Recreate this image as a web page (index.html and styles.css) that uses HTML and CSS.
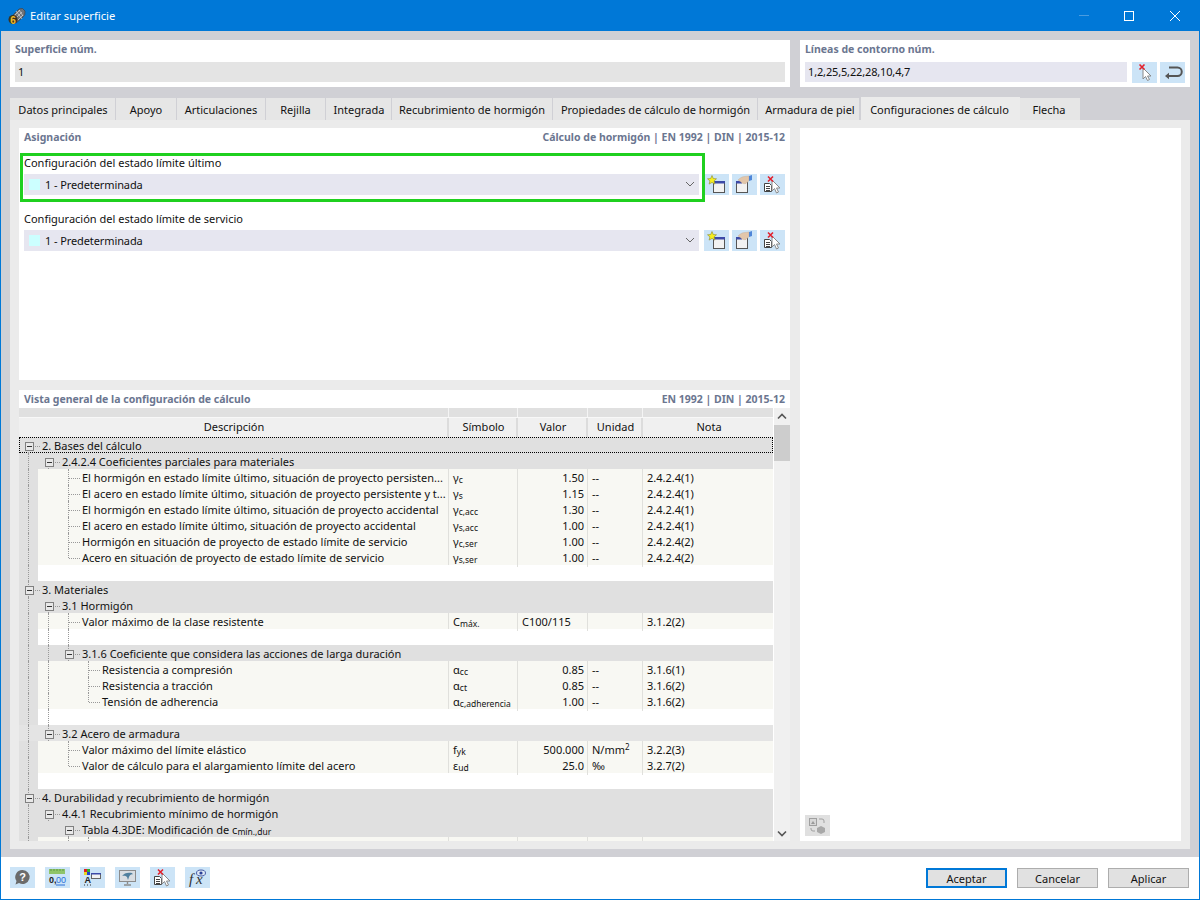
FILE: index.html
```html
<!DOCTYPE html>
<html lang="es">
<head>
  <meta charset="UTF-8">
  <title>Editar superficie</title>
  <link rel="stylesheet" href="styles.css">
</head>
<body>
  <svg class="defs" width="0" height="0">
    <symbol id="i-new" viewBox="0 0 25 21">
      <rect x="9.500" y="7.500" width="11" height="11" fill="#f2f2f2" stroke="#555"/>
      <rect x="9" y="7" width="12" height="2.500" fill="#3c4aa8"/>
      <path d="M8 1.500l1.300 3 3.200.3-2.400 2.100.8 3.200L8 8.400l-2.900 1.700.8-3.200-2.400-2.100 3.200-.3z" fill="#f5ee1e" stroke="#8a8a30" stroke-width=".6"/>
    </symbol>
    <symbol id="i-edit" viewBox="0 0 25 21">
      <rect x="4.500" y="7.500" width="11" height="11" fill="#f2f2f2" stroke="#555"/>
      <rect x="4" y="7" width="6" height="2.500" fill="#3c4aa8"/>
      <path d="M6 6c2-2 4-3.500 7-3.500l4-.5v4.500l-3 3c-2 .5-4 0-5-1.500z" fill="#e2c6aa" stroke="#c0a894" stroke-width=".4"/>
      <path d="M17 2l3-1v5l-3 1z" fill="#4f86d8"/>
    </symbol>
    <symbol id="i-del" viewBox="0 0 25 21">
      <path d="M4.500 9.500h5l2 2v6h-7z" fill="#fff" stroke="#444"/>
      <path d="M6 12.500h4M6 14.500h4M6 16.500h4" stroke="#444"/>
      <path d="M12 6v11l2.500-2.500 2 4.500 2-1-2-4h3.500z" fill="#fff" stroke="#8a8a8a"/>
      <path d="M8 2.500l5 5M13 2.500l-5 5" stroke="#e3202c" stroke-width="1.600"/>
    </symbol>
    <symbol id="i-pick" viewBox="0 0 25 21">
      <path d="M11 6v11l2.500-2.500 2 4 2-1-2-3.500H19z" fill="#fff" stroke="#8a8a8a"/>
      <path d="M7.500 2.500l5 5M12.500 2.500l-5 5" stroke="#e3202c" stroke-width="1.600"/>
    </symbol>
    <symbol id="i-back" viewBox="0 0 25 21">
      <path d="M9 5.500h8.500a4 4 0 0 1 0 8.500H7" fill="none" stroke="#555" stroke-width="2"/>
      <path d="M5 14l4-3.200v6.400z" fill="#555"/>
    </symbol>
    <symbol id="i-view" viewBox="0 0 25 21">
      <rect x="4.500" y="3.500" width="16" height="11" fill="#d8dde2" stroke="#8c8c8c"/>
      <path d="M7 9c2-3 6-4 10-3l1 1.500c-2-.5-3 .5-4 2.500l-1 3-1-3c-1-1-3-1.500-5-1z" fill="#4f7f9e"/>
      <path d="M12.500 15v2M9 18h7" stroke="#8c8c8c" stroke-width="1.400"/>
    </symbol>
    <symbol id="i-swap" viewBox="0 0 25 21">
      <rect x="4.500" y="3.500" width="7" height="7" fill="#d8d8d8" stroke="#a0a0a0"/>
      <path d="M6 9l2-3 2 3z" fill="#9a9a9a"/>
      <path d="M14 4h3a2 2 0 0 1 2 2v2M6 13v1a2 2 0 0 0 2 2h2" fill="none" stroke="#a0a0a0"/>
      <path d="M12 13l4-2 4 2v4l-4 2-4-2z" fill="#a8a8a8"/>
    </symbol>
  </svg>

  <div class="window">
    <header class="titlebar">
      <svg class="app-icon" width="18" height="18" viewBox="0 0 18 18">
        <path d="M4 9l7-7q4-2 6 2 1 4-3 7l-6 5q-5-2-4-7z" fill="#6e7278" stroke="#34373b" stroke-width=".6"/>
        <path d="M6 9l6-6M8 11l6-6M10 13l5-5M8 4l6 8M11 3l4 6" stroke="#d6d9dd" stroke-width=".7"/>
        <circle cx="5" cy="12.500" r="4.500" fill="#3a3320"/>
        <text x="2.300" y="16.500" class="app-six">6</text>
      </svg>
      <span class="title">Editar superficie</span>
      <div class="win-buttons">
        <span class="win-min"></span>
        <span class="win-max"></span>
        <svg width="12" height="12" viewBox="0 0 12 12"><path d="M1 1l10 10M11 1L1 11" stroke="#fff"/></svg>
      </div>
    </header>

    <main class="main">
      <div class="top-row">
        <section class="top-panel">
          <div class="heading">Superficie núm.</div>
          <div class="field field-grey">1</div>
        </section>
        <section class="top-panel">
          <div class="heading">Líneas de contorno núm.</div>
          <div class="field-row">
            <div class="field field-blue">1,2,25,5,22,28,10,4,7</div>
            <span class="btn btn-first"><svg><use href="#i-pick"/></svg></span>
            <span class="btn"><svg><use href="#i-back"/></svg></span>
          </div>
        </section>
      </div>

      <nav class="tabs">
        <span class="tab tab-1">Datos principales</span>
        <span class="tab tab-2">Apoyo</span>
        <span class="tab tab-3">Articulaciones</span>
        <span class="tab tab-4">Rejilla</span>
        <span class="tab tab-5">Integrada</span>
        <span class="tab tab-6">Recubrimiento de hormigón</span>
        <span class="tab tab-7">Propiedades de cálculo de hormigón</span>
        <span class="tab tab-8">Armadura de piel</span>
        <span class="tab tab-9 active">Configuraciones de cálculo</span>
        <span class="tab tab-10">Flecha</span>
      </nav>

      <div class="pane">
        <div class="left-col">
          <section class="assign">
            <div class="head-row">
              <span class="heading">Asignación</span>
              <span class="heading">Cálculo de hormigón | EN 1992 | DIN | 2015-12</span>
            </div>
            <div class="config config-uls">
              <div class="config-label">Configuración del estado límite último</div>
              <div class="config-row">
                <div class="combo"><span class="swatch"></span>1 - Predeterminada
                  <svg class="chevron" width="10" height="6" viewBox="0 0 10 6"><path d="M1 1l4 4 4-4" fill="none" stroke="#666" stroke-width="1"/></svg>
                </div>
                <span class="btn"><svg><use href="#i-new"/></svg></span>
                <span class="btn"><svg><use href="#i-edit"/></svg></span>
                <span class="btn"><svg><use href="#i-del"/></svg></span>
              </div>
            </div>
            <div class="config">
              <div class="config-label">Configuración del estado límite de servicio</div>
              <div class="config-row">
                <div class="combo"><span class="swatch"></span>1 - Predeterminada
                  <svg class="chevron" width="10" height="6" viewBox="0 0 10 6"><path d="M1 1l4 4 4-4" fill="none" stroke="#666" stroke-width="1"/></svg>
                </div>
                <span class="btn"><svg><use href="#i-new"/></svg></span>
                <span class="btn"><svg><use href="#i-edit"/></svg></span>
                <span class="btn"><svg><use href="#i-del"/></svg></span>
              </div>
            </div>
          </section>

          <section class="overview">
            <div class="head-row head-overview">
              <span class="heading">Vista general de la configuración de cálculo</span>
              <span class="heading">EN 1992 | DIN | 2015-12</span>
            </div>
            <div class="table-wrap">
              <div class="table">
                <div class="row row-band"><span></span><span></span><span></span><span></span><span></span></div>
                <div class="row row-head"><span>Descripción</span><span>Símbolo</span><span>Valor</span><span>Unidad</span><span>Nota</span></div>
                <div class="tbody">
                  <div class="row group focus"><div class="desc"><i class="g b top"><u></u></i><em>2. Bases del cálculo</em></div></div>
                  <div class="row group"><div class="desc"><i class="g v"></i><i class="g b top"><u></u></i><em>2.4.2.4 Coeficientes parciales para materiales</em></div></div>
                  <div class="row data"><div class="desc"><i class="g v"></i><i class="g"></i><i class="g t"></i><em>El hormigón en estado límite último, situación de proyecto persisten...</em></div><div class="sym">γ<sub>c</sub></div><div class="val">1.50</div><div class="unit">--</div><div class="note">2.4.2.4(1)</div></div>
                  <div class="row data"><div class="desc"><i class="g v"></i><i class="g"></i><i class="g t"></i><em>El acero en estado límite último, situación de proyecto persistente y t...</em></div><div class="sym">γ<sub>s</sub></div><div class="val">1.15</div><div class="unit">--</div><div class="note">2.4.2.4(1)</div></div>
                  <div class="row data"><div class="desc"><i class="g v"></i><i class="g"></i><i class="g t"></i><em>El hormigón en estado límite último, situación de proyecto accidental</em></div><div class="sym">γ<sub>c,acc</sub></div><div class="val">1.30</div><div class="unit">--</div><div class="note">2.4.2.4(1)</div></div>
                  <div class="row data"><div class="desc"><i class="g v"></i><i class="g"></i><i class="g t"></i><em>El acero en estado límite último, situación de proyecto accidental</em></div><div class="sym">γ<sub>s,acc</sub></div><div class="val">1.00</div><div class="unit">--</div><div class="note">2.4.2.4(1)</div></div>
                  <div class="row data"><div class="desc"><i class="g v"></i><i class="g"></i><i class="g t"></i><em>Hormigón en situación de proyecto de estado límite de servicio</em></div><div class="sym">γ<sub>c,ser</sub></div><div class="val">1.00</div><div class="unit">--</div><div class="note">2.4.2.4(2)</div></div>
                  <div class="row data"><div class="desc"><i class="g v"></i><i class="g"></i><i class="g e"></i><em>Acero en situación de proyecto de estado límite de servicio</em></div><div class="sym">γ<sub>s,ser</sub></div><div class="val">1.00</div><div class="unit">--</div><div class="note">2.4.2.4(2)</div></div>
                  <div class="row blank"><div class="desc"><i class="g v"></i></div></div>

                  <div class="row group"><div class="desc"><i class="g b"><u></u></i><em>3. Materiales</em></div></div>
                  <div class="row group"><div class="desc"><i class="g v"></i><i class="g b top"><u></u></i><em>3.1 Hormigón</em></div></div>
                  <div class="row data"><div class="desc"><i class="g v"></i><i class="g v"></i><i class="g t"></i><em>Valor máximo de la clase resistente</em></div><div class="sym">C<sub>máx.</sub></div><div class="val val-left">C100/115</div><div class="unit"></div><div class="note">3.1.2(2)</div></div>
                  <div class="row blank"><div class="desc"><i class="g v"></i><i class="g v"></i><i class="g v"></i></div></div>
                  <div class="row group"><div class="desc"><i class="g v"></i><i class="g v"></i><i class="g b"><u></u></i><em>3.1.6 Coeficiente que considera las acciones de larga duración</em></div></div>
                  <div class="row data"><div class="desc"><i class="g v"></i><i class="g v"></i><i class="g"></i><i class="g t"></i><em>Resistencia a compresión</em></div><div class="sym">α<sub>cc</sub></div><div class="val">0.85</div><div class="unit">--</div><div class="note">3.1.6(1)</div></div>
                  <div class="row data"><div class="desc"><i class="g v"></i><i class="g v"></i><i class="g"></i><i class="g t"></i><em>Resistencia a tracción</em></div><div class="sym">α<sub>ct</sub></div><div class="val">0.85</div><div class="unit">--</div><div class="note">3.1.6(2)</div></div>
                  <div class="row data"><div class="desc"><i class="g v"></i><i class="g v"></i><i class="g"></i><i class="g e"></i><em>Tensión de adherencia</em></div><div class="sym">α<sub>c,adherencia</sub></div><div class="val">1.00</div><div class="unit">--</div><div class="note">3.1.6(2)</div></div>
                  <div class="row blank"><div class="desc"><i class="g v"></i><i class="g v"></i></div></div>
                  <div class="row group light"><div class="desc"><i class="g v"></i><i class="g b"><u></u></i><em>3.2 Acero de armadura</em></div></div>
                  <div class="row data"><div class="desc"><i class="g v"></i><i class="g"></i><i class="g t"></i><em>Valor máximo del límite elástico</em></div><div class="sym">f<sub>yk</sub></div><div class="val">500.000</div><div class="unit">N/mm<sup>2</sup></div><div class="note">3.2.2(3)</div></div>
                  <div class="row data"><div class="desc"><i class="g v"></i><i class="g"></i><i class="g e"></i><em>Valor de cálculo para el alargamiento límite del acero</em></div><div class="sym">ε<sub>ud</sub></div><div class="val">25.0</div><div class="unit">‰</div><div class="note">3.2.7(2)</div></div>
                  <div class="row blank"><div class="desc"><i class="g v"></i></div></div>

                  <div class="row group"><div class="desc"><i class="g b"><u></u></i><em>4. Durabilidad y recubrimiento de hormigón</em></div></div>
                  <div class="row group"><div class="desc"><i class="g v"></i><i class="g b top"><u></u></i><em>4.4.1 Recubrimiento mínimo de hormigón</em></div></div>
                  <div class="row group"><div class="desc"><i class="g v"></i><i class="g"></i><i class="g b top"><u></u></i><em>Tabla 4.3DE: Modificación de c<sub>mín.,dur</sub></em></div></div>
                  <div class="row data"><div class="desc"><i class="g v"></i><i class="g"></i><i class="g v"></i><i class="g v"></i></div><div class="sym"></div><div class="val"></div><div class="unit"></div><div class="note"></div></div>
                </div>
              </div>
              <div class="scrollbar">
                <span class="scroll-btn"><svg width="10" height="7" viewBox="0 0 10 7"><path d="M1 5.500l4-4 4 4" fill="none" stroke="#555" stroke-width="1.600"/></svg></span>
                <span class="thumb"></span>
                <span class="scroll-btn scroll-down"><svg width="10" height="7" viewBox="0 0 10 7"><path d="M1 1.500l4 4 4-4" fill="none" stroke="#555" stroke-width="1.600"/></svg></span>
              </div>
            </div>
          </section>
        </div>

        <aside class="preview">
          <span class="btn btn-off"><svg><use href="#i-swap"/></svg></span>
        </aside>
      </div>
    </main>

    <footer class="footer">
      <div class="tools">
        <span class="btn">
          <svg viewBox="0 0 25 21">
            <path d="M12.500 3a7 7 0 1 1-3.500 13l-3.500 1.500 1-3.500a7 7 0 0 1 6-11z" fill="#6b6b6b"/>
            <text x="12.500" y="14" text-anchor="middle" class="svg-q">?</text>
          </svg>
        </span>
        <span class="btn">
          <svg viewBox="0 0 25 21">
            <rect x="4" y="2" width="16" height="5" fill="#8fc46a"/>
            <path d="M6 2v2M9 2v2M12 2v2M15 2v2M18 2v2" stroke="#5f9a45"/>
            <text x="4" y="16" class="svg-num">0,<tspan x="11" class="svg-blue">00</tspan></text>
            <path d="M11 18h9" stroke="#2a6fd8"/>
          </svg>
        </span>
        <span class="btn">
          <svg viewBox="0 0 25 21">
            <rect x="4" y="2" width="3" height="3" fill="#e02020"/>
            <rect x="7" y="2" width="3" height="3" fill="#30b030"/>
            <rect x="4" y="5" width="3" height="3" fill="#e8d820"/>
            <rect x="7" y="5" width="3" height="3" fill="#2040d0"/>
            <text x="4.500" y="16" class="svg-num">A</text>
            <path d="M4 18h1M7 18h1M10 18h1" stroke="#333"/>
            <rect x="11.500" y="6.500" width="9" height="5" fill="#f2f2f2" stroke="#666"/>
            <rect x="11" y="6" width="10" height="1.500" fill="#3c4aa8"/>
          </svg>
        </span>
        <span class="btn"><svg><use href="#i-view"/></svg></span>
        <span class="btn"><svg><use href="#i-del"/></svg></span>
        <span class="btn">
          <svg viewBox="0 0 25 21">
            <text x="4" y="17" class="svg-fx">f<tspan x="11">x</tspan></text>
            <ellipse cx="16" cy="6" rx="4.500" ry="3" fill="#dce6f5" stroke="#4a5fa8"/>
            <circle cx="16" cy="6" r="1.600" fill="#2a3f98"/>
          </svg>
        </span>
      </div>
      <div class="actions">
        <button class="action primary">Aceptar</button>
        <button class="action">Cancelar</button>
        <button class="action">Aplicar</button>
      </div>
    </footer>
  </div>
</body>
</html>
```

FILE: styles.css
```css
*,
*::before,
*::after {
  box-sizing: border-box;
}
body {
  margin: 0;
  font-family: "Noto Sans", sans-serif;
  font-size: 11px;
  color: #111;
}
.defs {
  position: absolute;
}
.window {
  width: 1200px;
  height: 900px;
  display: flex;
  flex-direction: column;
  border: 1px solid #0078d7;
  border-top: 0;
  background: #d0d0d5;
}

/* Barra de titulo */
.titlebar {
  height: 31px;
  flex: none;
  margin: 0 -1px;
  padding-left: 8px;
  display: flex;
  align-items: center;
  background: #0078d7;
  color: #fff;
}
.app-icon {
  margin-right: 4px;
}
.app-six {
  font: bold 10px "Liberation Sans", sans-serif;
  fill: #f0bc28;
}
.title {
  font-size: 11.200px;
}
.win-buttons {
  margin-left: auto;
  display: flex;
  align-items: center;
  padding-right: 19px;
}
.win-min {
  width: 10px;
  height: 1px;
  background: #4a9ce0;
  margin-right: 35px;
}
.win-max {
  width: 10px;
  height: 10px;
  border: 1px solid #fff;
  margin-right: 35px;
}

.main {
  flex: 1;
  padding: 9px 9px 8px;
  display: flex;
  flex-direction: column;
  min-height: 0;
}
.top-row {
  display: flex;
  gap: 10px;
}
.top-panel {
  height: 47px;
  background: #fff;
  padding: 1px 5px 0;
}
.top-panel:first-child {
  width: 780px;
}
.top-panel:last-child {
  width: 390px;
}
.heading {
  font-weight: 700;
  font-size: 10.500px;
  color: #6b7690;
  line-height: 16px;
}
.top-panel .heading {
  height: 21px;
}
.field {
  height: 20px;
  line-height: 20px;
  padding-left: 3px;
}
.field-grey {
  background: #e4e4e4;
}
.field-blue {
  background: #e6e6f0;
  width: 322px;
  letter-spacing: -.15px;
}
.field-row {
  display: flex;
}
.btn {
  width: 25px;
  height: 21px;
  flex: none;
  background: #cce4f7;
  display: block;
}
.btn svg {
  width: 25px;
  height: 21px;
  display: block;
}
.btn-first {
  margin: 0 3px 0 5px;
}
.svg-q {
  font: bold 11px "Liberation Sans", sans-serif;
  fill: #fff;
}
.svg-num {
  font: bold 9px "Liberation Sans", sans-serif;
  fill: #222;
}
.svg-blue {
  fill: #2a6fd8;
  font-weight: 400;
}
.svg-fx {
  font: italic 15px "Liberation Serif", serif;
  fill: #333;
}

/* Pestanas */
.tabs {
  margin-top: 10px;
  height: 23px;
  display: flex;
  align-items: flex-end;
  gap: 1px;
}
.tab {
  height: 22px;
  line-height: 24px;
  background: #e6e6e6;
  text-align: center;
  white-space: nowrap;
}
.tab.active {
  height: 23px;
  line-height: 26px;
  background: #ebebeb;
}
.tab-1 { width: 105px; padding-left: 1px; }
.tab-2 { width: 60px; }
.tab-3 { width: 88px; }
.tab-4 { width: 59px; }
.tab-5 { width: 65px; padding-left: 1px; }
.tab-6 { width: 160px; }
.tab-7 { width: 204px; padding-left: 1px; }
.tab-8 { width: 101px; padding-left: 3px; }
.tab-9 { width: 159px; margin-left: 1px; padding-right: 2px; }
.tab-10 { width: 60px; margin-left: -1px; padding-right: 2px; }

.pane {
  flex: 1;
  min-height: 0;
  background: #ebebeb;
  padding: 8px 9px;
  display: flex;
  gap: 10px;
}
.left-col {
  width: 771px;
  display: flex;
  flex-direction: column;
  gap: 10px;
}
.preview {
  width: 381px;
  background: #fff;
  display: flex;
  align-items: flex-end;
  padding: 0 0 5px 5px;
}
.btn-off {
  background: #e0e0e0;
}

/* Asignacion */
.assign {
  height: 252px;
  background: #fff;
  padding: 1px 5px;
}
.head-row {
  display: flex;
  justify-content: space-between;
  height: 16px;
}
.config {
  position: relative;
  height: 56px;
}
.config-uls {
  margin-top: 8px;
}
.config-uls::after {
  content: "";
  position: absolute;
  left: -4px;
  top: 0;
  width: 685px;
  height: 49px;
  border: 3px solid #1fd01f;
}
.config-label {
  height: 21px;
  line-height: 19px;
}
.config-row {
  display: flex;
}
.config-row .btn {
  margin-left: 3px;
}
.config-row .combo + .btn {
  margin-left: 5px;
}
.combo {
  width: 675px;
  height: 21px;
  background: #e6e6f0;
  display: flex;
  align-items: center;
  padding-left: 5px;
  position: relative;
  letter-spacing: -.1px;
}
.swatch {
  width: 11px;
  height: 11px;
  background: #ccffff;
  margin-right: 5px;
}
.chevron {
  position: absolute;
  right: 4px;
  top: 7px;
}

/* Tabla de resumen */
.overview {
  flex: 1;
  min-height: 0;
  background: #fff;
  display: flex;
  flex-direction: column;
}
.head-overview {
  height: 18px;
  padding: 1px 5px 0;
}
.table-wrap {
  flex: 1;
  min-height: 0;
  display: flex;
  gap: 1px;
}
.table {
  width: 754px;
  display: flex;
  flex-direction: column;
}
.tbody {
  flex: 1;
  min-height: 0;
  overflow: hidden;
}
.row {
  display: grid;
  grid-template-columns: 430px 69px 70px 55px 130px;
  height: 16px;
  line-height: 18px;
}
.row-band {
  height: 9px;
  background: #e0e0e0;
}
.row-band span {
  border-right: 1px solid #f4f4f4;
}
.row-band span:last-child,
.row-head span:last-child {
  border-right: 0;
}
.row-head {
  height: 20px;
  line-height: 18px;
  background: #f0f0f0;
  border-top: 1px solid #f8f8f8;
  text-align: center;
}
.row-head span {
  border-right: 2px solid #dcdcdc;
  padding-left: 2px;
}
.group,
.blank {
  display: block;
}
.group {
  background: #e0e0e0;
}
.group.light {
  background: #e4e4e4;
}
.focus {
  outline: 1px dotted #000;
  outline-offset: -1px;
}
.blank {
  background: #fff;
}
.data {
  background: #f8f8f3;
}
.desc {
  height: 16px;
  display: flex;
  overflow: hidden;
  white-space: nowrap;
  background: linear-gradient(to right, #e0e0e0 19px, transparent 19px);
}
.group .desc {
  background: none;
}
.data .desc,
.sym,
.val,
.unit {
  border-right: 1px solid #e0e0dc;
}
.desc em {
  font-style: normal;
  padding-left: 3px;
}
.sym {
  padding-left: 4px;
  overflow: hidden;
  white-space: nowrap;
}
.val {
  text-align: right;
  padding-right: 3px;
}
.val-left {
  text-align: left;
  padding-left: 4px;
}
.unit {
  padding-left: 4px;
}
.note {
  padding-left: 4px;
}
sub {
  font-size: 8.500px;
  line-height: 0;
  vertical-align: -1px;
}
sup {
  font-size: 8px;
  line-height: 0;
  vertical-align: 4px;
}

/* Lineas del arbol */
.g {
  position: relative;
  width: 20px;
  height: 16px;
  flex: none;
}
.v::before,
.t::before,
.e::before,
.b::before {
  content: "";
  position: absolute;
  left: 9px;
  top: 0;
  bottom: 0;
  border-left: 1px dotted #999;
}
.e::before {
  bottom: 7px;
}
.b.top::before {
  top: 9px;
}
.t::after,
.e::after,
.b::after {
  content: "";
  position: absolute;
  left: 10px;
  top: 9px;
  width: 11px;
  border-top: 1px dotted #999;
}
.g u {
  position: absolute;
  z-index: 1;
  left: 6px;
  top: 5px;
  width: 9px;
  height: 9px;
  background: #e8e8e8;
  border: 1px solid #808080;
}
.g u::after {
  content: "";
  position: absolute;
  left: 1px;
  top: 3px;
  width: 5px;
  height: 1px;
  background: #333;
}

.scrollbar {
  width: 16px;
  background: #f0f0f0;
  display: flex;
  flex-direction: column;
}
.scroll-btn {
  height: 17px;
  display: flex;
  align-items: center;
  justify-content: center;
}
.scroll-down {
  margin-top: auto;
  height: 16px;
}
.thumb {
  height: 36px;
  background: #cdcdcd;
}

/* Pie */
.footer {
  height: 42px;
  flex: none;
  background: #fff;
  display: flex;
  justify-content: space-between;
  padding: 10px 10px 0 9px;
}
.tools {
  display: flex;
  gap: 10px;
}
.actions {
  display: flex;
  gap: 10px;
  padding-top: 1px;
}
.action {
  width: 81px;
  height: 20px;
  padding: 0;
  background: #e1e1e1;
  border: 1px solid #adadad;
  font: inherit;
  color: #111;
}
.primary {
  border: 2px solid #0078d7;
}
```
